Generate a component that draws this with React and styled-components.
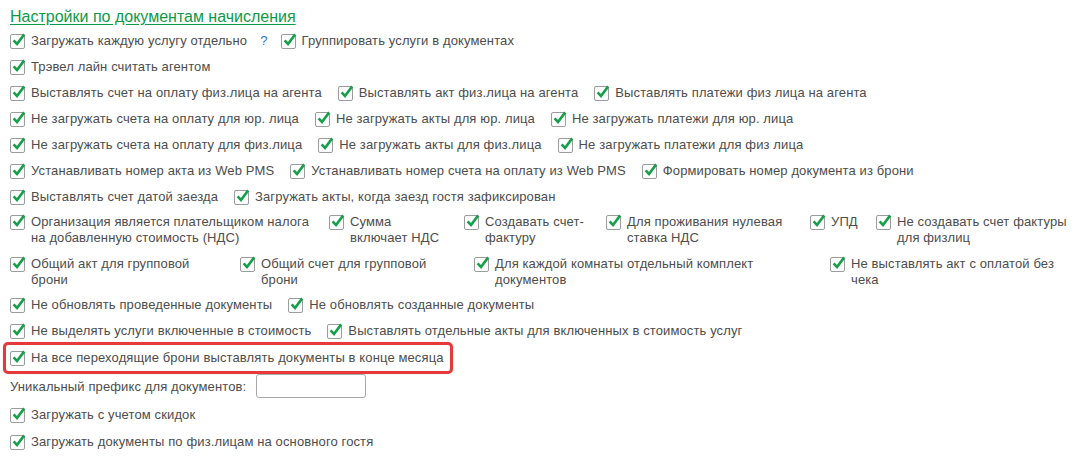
import styled, { createGlobalStyle } from "styled-components";

const Global = createGlobalStyle`
  html, body {
    margin: 0;
    background: #fff;
  }
  body {
    font-family: "Liberation Sans", Arial, sans-serif;
    font-size: 13px;
    color: #4d4d4d;
  }
`

const Page = styled.div`
  padding: 8px 10px 0 10px;
  display: flex;
  flex-direction: column;
`

const Title = styled.div`
  font-size: 16px;
  line-height: 18px;
  color: #0d9a48;
  text-decoration: underline;
  text-underline-offset: 2px;
  margin-bottom: 7px;
`

const Stack = styled.div`
  display: flex;
  flex-direction: column;
  gap: 10px;
  letter-spacing: 0.12px;
`

const Row = styled.div`
  display: flex;
  align-items: flex-start;
  gap: ${p => (p.$cols ? 0 : 16)}px;
  line-height: 16px;
  margin-top: ${p => p.$mt || 0}px;
`

const Option = styled.div`
  display: flex;
  align-items: flex-start;
  gap: 6px;
  flex: none;
  width: ${p => (p.$w ? `${p.$w}px` : "auto")};
`

const Box = styled.span`
  position: relative;
  flex: none;
  width: 13px;
  height: 13px;
  margin-top: 1px;
  border: 1px solid #9c9c9c;
  border-radius: 2px;
  background: #fff;

  svg {
    position: absolute;
    left: -1px;
    top: -3px;
  }
`

const Label = styled.span`
  max-width: ${p => (p.$tw ? `${p.$tw}px` : "none")};
  white-space: ${p => (p.$tw ? "normal" : "nowrap")};
`

const Help = styled.span`
  color: #2f6fcf;
  margin-left: 13px;
  margin-right: -3px;
  font-size: 13px;
`

const Highlight = styled.div`
  align-self: flex-start;
  margin: -7px 0 -10px -7px;
  padding: 5px 6px 5px 4px;
  border: 3px solid #e5393b;
  border-radius: 5px;
  box-shadow: 0 0 1px rgba(229, 57, 59, 0.5);
`

const Field = styled.div`
  display: flex;
  align-items: center;
  gap: 10px;
  height: 24px;
`

const TextInput = styled.input`
  width: 110px;
  height: 24px;
  box-sizing: border-box;
  border: 1px solid #a8a8a8;
  border-radius: 3px;
  padding: 0 4px;
  font: inherit;
  outline: none;
`

const Check = ({ children, w, tw, help }) => (
  <Option $w={w}>
    <Box>
      <svg width="17" height="17" viewBox="0 0 17 17">
        <path d="M3.6 8.4 L7 12 L14.2 2.4" fill="none" stroke="#16a04a" strokeWidth="2.6" strokeLinejoin="miter" />
      </svg>
    </Box>
    <Label $tw={tw}>
      {children}
      {help && <Help>?</Help>}
    </Label>
  </Option>
)

const App = () => {
  return <>
    <Global />
    <Page>
      <Title>Настройки по документам начисления</Title>
      <Stack>
        <Row>
          <Check help>Загружать каждую услугу отдельно</Check>
          <Check>Группировать услуги в документах</Check>
        </Row>
        <Row>
          <Check>Трэвел лайн считать агентом</Check>
        </Row>
        <Row>
          <Check>Выставлять счет на оплату физ.лица на агента</Check>
          <Check>Выставлять акт физ.лица на агента</Check>
          <Check>Выставлять платежи физ лица на агента</Check>
        </Row>
        <Row>
          <Check>Не загружать счета на оплату для юр. лица</Check>
          <Check>Не загружать акты для юр. лица</Check>
          <Check>Не загружать платежи для юр. лица</Check>
        </Row>
        <Row>
          <Check>Не загружать счета на оплату для физ.лица</Check>
          <Check>Не загружать акты для физ.лица</Check>
          <Check>Не загружать платежи для физ лица</Check>
        </Row>
        <Row>
          <Check>Устанавливать номер акта из Web PMS</Check>
          <Check>Устанавливать номер счета на оплату из Web PMS</Check>
          <Check>Формировать номер документа из брони</Check>
        </Row>
        <Row>
          <Check>Выставлять счет датой заезда</Check>
          <Check>Загружать акты, когда заезд гостя зафиксирован</Check>
        </Row>
        <Row $cols $mt={-1}>
          <Check w={319} tw={286}>Организация является плательщиком налога на добавленную стоимость (НДС)</Check>
          <Check w={135} tw={94}>Сумма включает НДС</Check>
          <Check w={142} tw={112}>Создавать счет-фактуру</Check>
          <Check w={204} tw={172}>Для проживания нулевая ставка НДС</Check>
          <Check w={66}>УПД</Check>
          <Check w={204} tw={184}>Не создавать счет фактуры для физлиц</Check>
        </Row>
        <Row $cols>
          <Check w={230} tw={180}>Общий акт для групповой брони</Check>
          <Check w={234} tw={200}>Общий счет для групповой брони</Check>
          <Check w={356} tw={274}>Для каждой комнаты отдельный комплект документов</Check>
          <Check w={240} tw={218}>Не выставлять акт с оплатой без чека</Check>
        </Row>
        <Row $mt={-1}>
          <Check>Не обновлять проведенные документы</Check>
          <Check>Не обновлять созданные документы</Check>
        </Row>
        <Row>
          <Check>Не выделять услуги включенные в стоимость</Check>
          <Check>Выставлять отдельные акты для включенных в стоимость услуг</Check>
        </Row>
        <Highlight>
          <Row>
            <Check>На все переходящие брони выставлять документы в конце месяца</Check>
          </Row>
        </Highlight>
        <Field>
          <span>Уникальный префикс для документов:</span>
          <TextInput />
        </Field>
        <Row $mt={-1}>
          <Check>Загружать с учетом скидок</Check>
        </Row>
        <Row $mt={1}>
          <Check>Загружать документы по физ.лицам на основного гостя</Check>
        </Row>
      </Stack>
    </Page>
  </>
}

export default App
